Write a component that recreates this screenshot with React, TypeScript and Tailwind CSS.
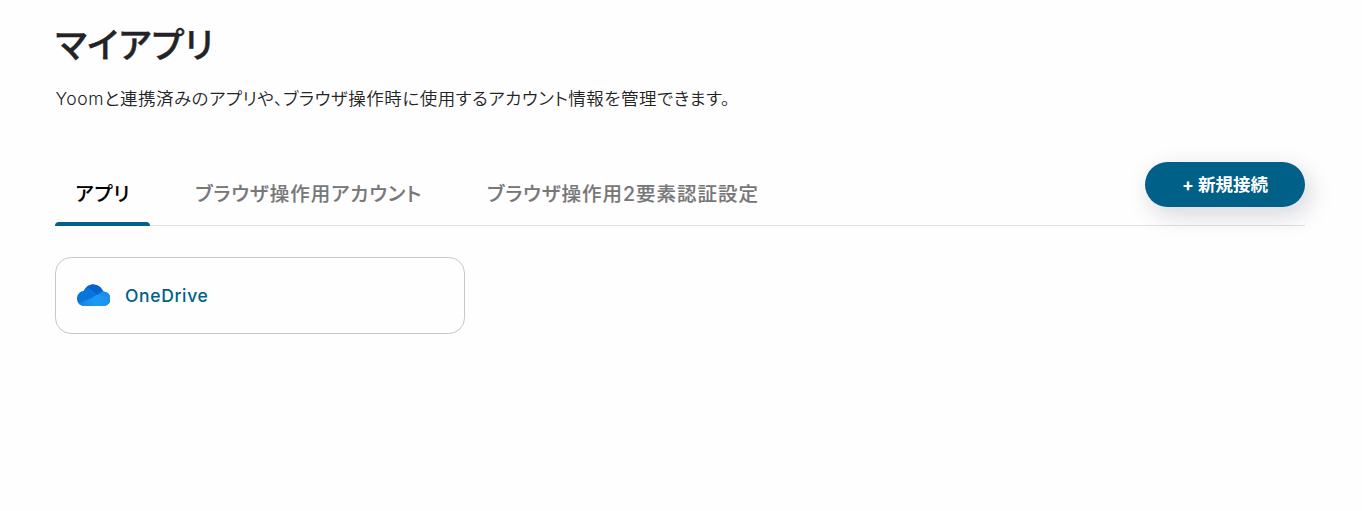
const tabs = ["アプリ", "ブラウザ操作用アカウント", "ブラウザ操作用2要素認証設定"];

function OneDriveIcon() {
  return (
    <svg width="33.500" height="22" viewBox="0 0 34 22" preserveAspectRatio="none" className="ml-[0.5px] mb-px" aria-hidden="true">
      <defs>
        <clipPath id="cloud">
          <path d="M7.500 22C3 22 0 18.700 0 14.600 0 10.700 2.800 7.500 6.600 7 8.500 2.900 12.300.4 16.500.4c4.600 0 8.500 2.900 10 7.100 4.200.2 7.500 3.200 7.500 7.200 0 4.200-3.200 7.300-7.500 7.300z" />
        </clipPath>
        <linearGradient id="front" x1="0" x2="1">
          <stop offset="0" stopColor="#1681e6" />
          <stop offset="0.6" stopColor="#1c9bf5" />
          <stop offset="1" stopColor="#1a8fef" />
        </linearGradient>
      </defs>
      <g clipPath="url(#cloud)">
        <path d="M0 0h34v22H0z" fill="#0775dc" />
        <path d="M9 3C13 4 17 8 21 11l7-3V0H9z" fill="#0863c8" />
        <path d="M20 11.500c3-2.500 5-4 8-4.500h7v15H20z" fill="#188ff0" />
        <path d="M0 20C7 17 14 15 20.500 10.800L34 14v8H0z" fill="url(#front)" />
      </g>
    </svg>
  );
}

export default function App() {
  return (
    <main className="h-[511px] bg-[#fefefe] pl-[55px] pr-[57px] pt-[23px] font-['Inter','Noto_Sans_CJK_JP',sans-serif] text-[#232326]">
      <h1 className="h-[44px] whitespace-nowrap pl-[0.5px] text-[35px] font-medium leading-[44px] tracking-[0.5px] [-webkit-text-stroke:0.4px_#232326] [font-feature-settings:'palt']">マイアプリ</h1>
      <p className="mt-[18px] h-[28px] whitespace-nowrap pl-[0.5px] text-[17.5px] font-[350] leading-[28px] tracking-[0.53px] [font-feature-settings:'palt']">Yoomと連携済みのアプリや、ブラウザ操作時に使用するアカウント情報を管理できます。</p>
      <div className="mt-[49px] flex h-[64px] items-start justify-between border-b border-[#dfdfe4]">
        <nav className="flex h-[64px] gap-[25px]">
          {tabs.map((tab, i) => (
            <button key={tab} className={i === 0 ? "relative h-[64px] whitespace-nowrap pl-[20.5px] pr-[19.5px] pt-px text-[19.5px] font-medium tracking-[0.95px] text-black [-webkit-text-stroke:0.15px_black] [font-feature-settings:'palt']" : "h-[64px] whitespace-nowrap pl-[20.5px] pr-[19.5px] pt-px text-[19.5px] font-medium tracking-[1px] text-[#777779] [-webkit-text-stroke:0.15px_#777779] [font-feature-settings:'palt']"}>
              {tab}
              {i === 0 && <span className="absolute inset-x-0 bottom-0 h-1 rounded-t-[4px] bg-[#006087]" />}
            </button>
          ))}
        </nav>
        <button className="h-[45px] w-[160px] rounded-full bg-[#006087] pt-px text-[17.5px] font-bold text-white shadow-[5px_8px_24px_rgba(20,20,60,0.17)] [font-feature-settings:'palt']">+ 新規接続</button>
      </div>
      <div className="mt-[31px] flex h-[77px] w-[410px] items-center gap-[15px] rounded-[16px] border border-[#c8c8cc] bg-[#fefefe] pl-5">
        <OneDriveIcon />
        <span className="pt-px text-[17.5px] font-medium tracking-[0.65px] text-[#006087]">OneDrive</span>
      </div>
    </main>
  );
}
